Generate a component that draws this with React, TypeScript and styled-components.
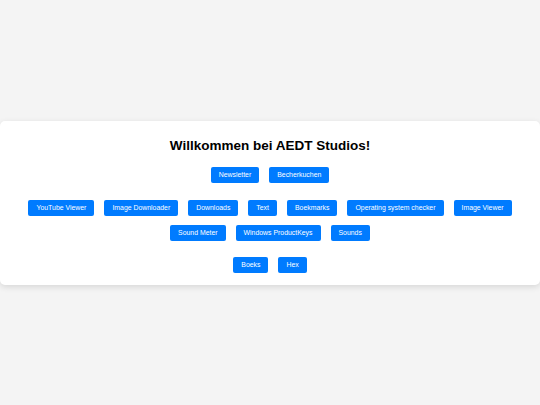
import styled, { createGlobalStyle } from 'styled-components'

const GlobalStyle = createGlobalStyle`
    html, body {
        margin: 0;
        padding: 0;
        background: #f4f4f4;
        font-family: "Liberation Sans", Arial, sans-serif;
    }
`

const Page = styled.div`
    min-height: 405px;
    display: flex;
    align-items: center;
`

const Card = styled.main`
    width: 100%;
    background: #ffffff;
    border-radius: 5px;
    box-shadow: 0 2px 6px rgba(0, 0, 0, 0.12);
    padding: 17px 0 12px;
    display: flex;
    flex-direction: column;
    align-items: center;
`

const Title = styled.h1`
    margin: 0;
    font-size: 13.5px;
    line-height: 16px;
    font-weight: 700;
    color: #000;
`

const ButtonGroup = styled.div<{ $top: number }>`
    display: flex;
    flex-wrap: wrap;
    justify-content: center;
    gap: 9px 10px;
    margin-top: ${(p) => p.$top}px;
    padding: 0 26px;
`

const LinkButton = styled.button`
    height: 16px;
    padding: 0 8px;
    border: none;
    border-radius: 2px;
    background: #007bff;
    color: #ffffff;
    font-family: "Liberation Sans", Arial, sans-serif;
    font-size: 6.9px;
    line-height: 16px;
    cursor: pointer;

    &:hover {
        background: #0062cc;
    }
`

const groups = [
    { top: 13, items: ['Newsletter', 'Becherkuchen'] },
    {
        top: 17,
        items: [
            'YouTube Viewer',
            'Image Downloader',
            'Downloads',
            'Text',
            'Boekmarks',
            'Operating system checker',
            'Image Viewer',
            'Sound Meter',
            'Windows ProductKeys',
            'Sounds',
        ],
    },
    { top: 16, items: ['Boeks', 'Hex'] },
]

const App = () => (
    <>
        <GlobalStyle />
        <Page>
            <Card>
                <Title>Willkommen bei AEDT Studios!</Title>
                {groups.map((g, i) => (
                    <ButtonGroup key={i} $top={g.top}>
                        {g.items.map((label) => (
                            <LinkButton key={label}>{label}</LinkButton>
                        ))}
                    </ButtonGroup>
                ))}
            </Card>
        </Page>
    </>
)

export default App
